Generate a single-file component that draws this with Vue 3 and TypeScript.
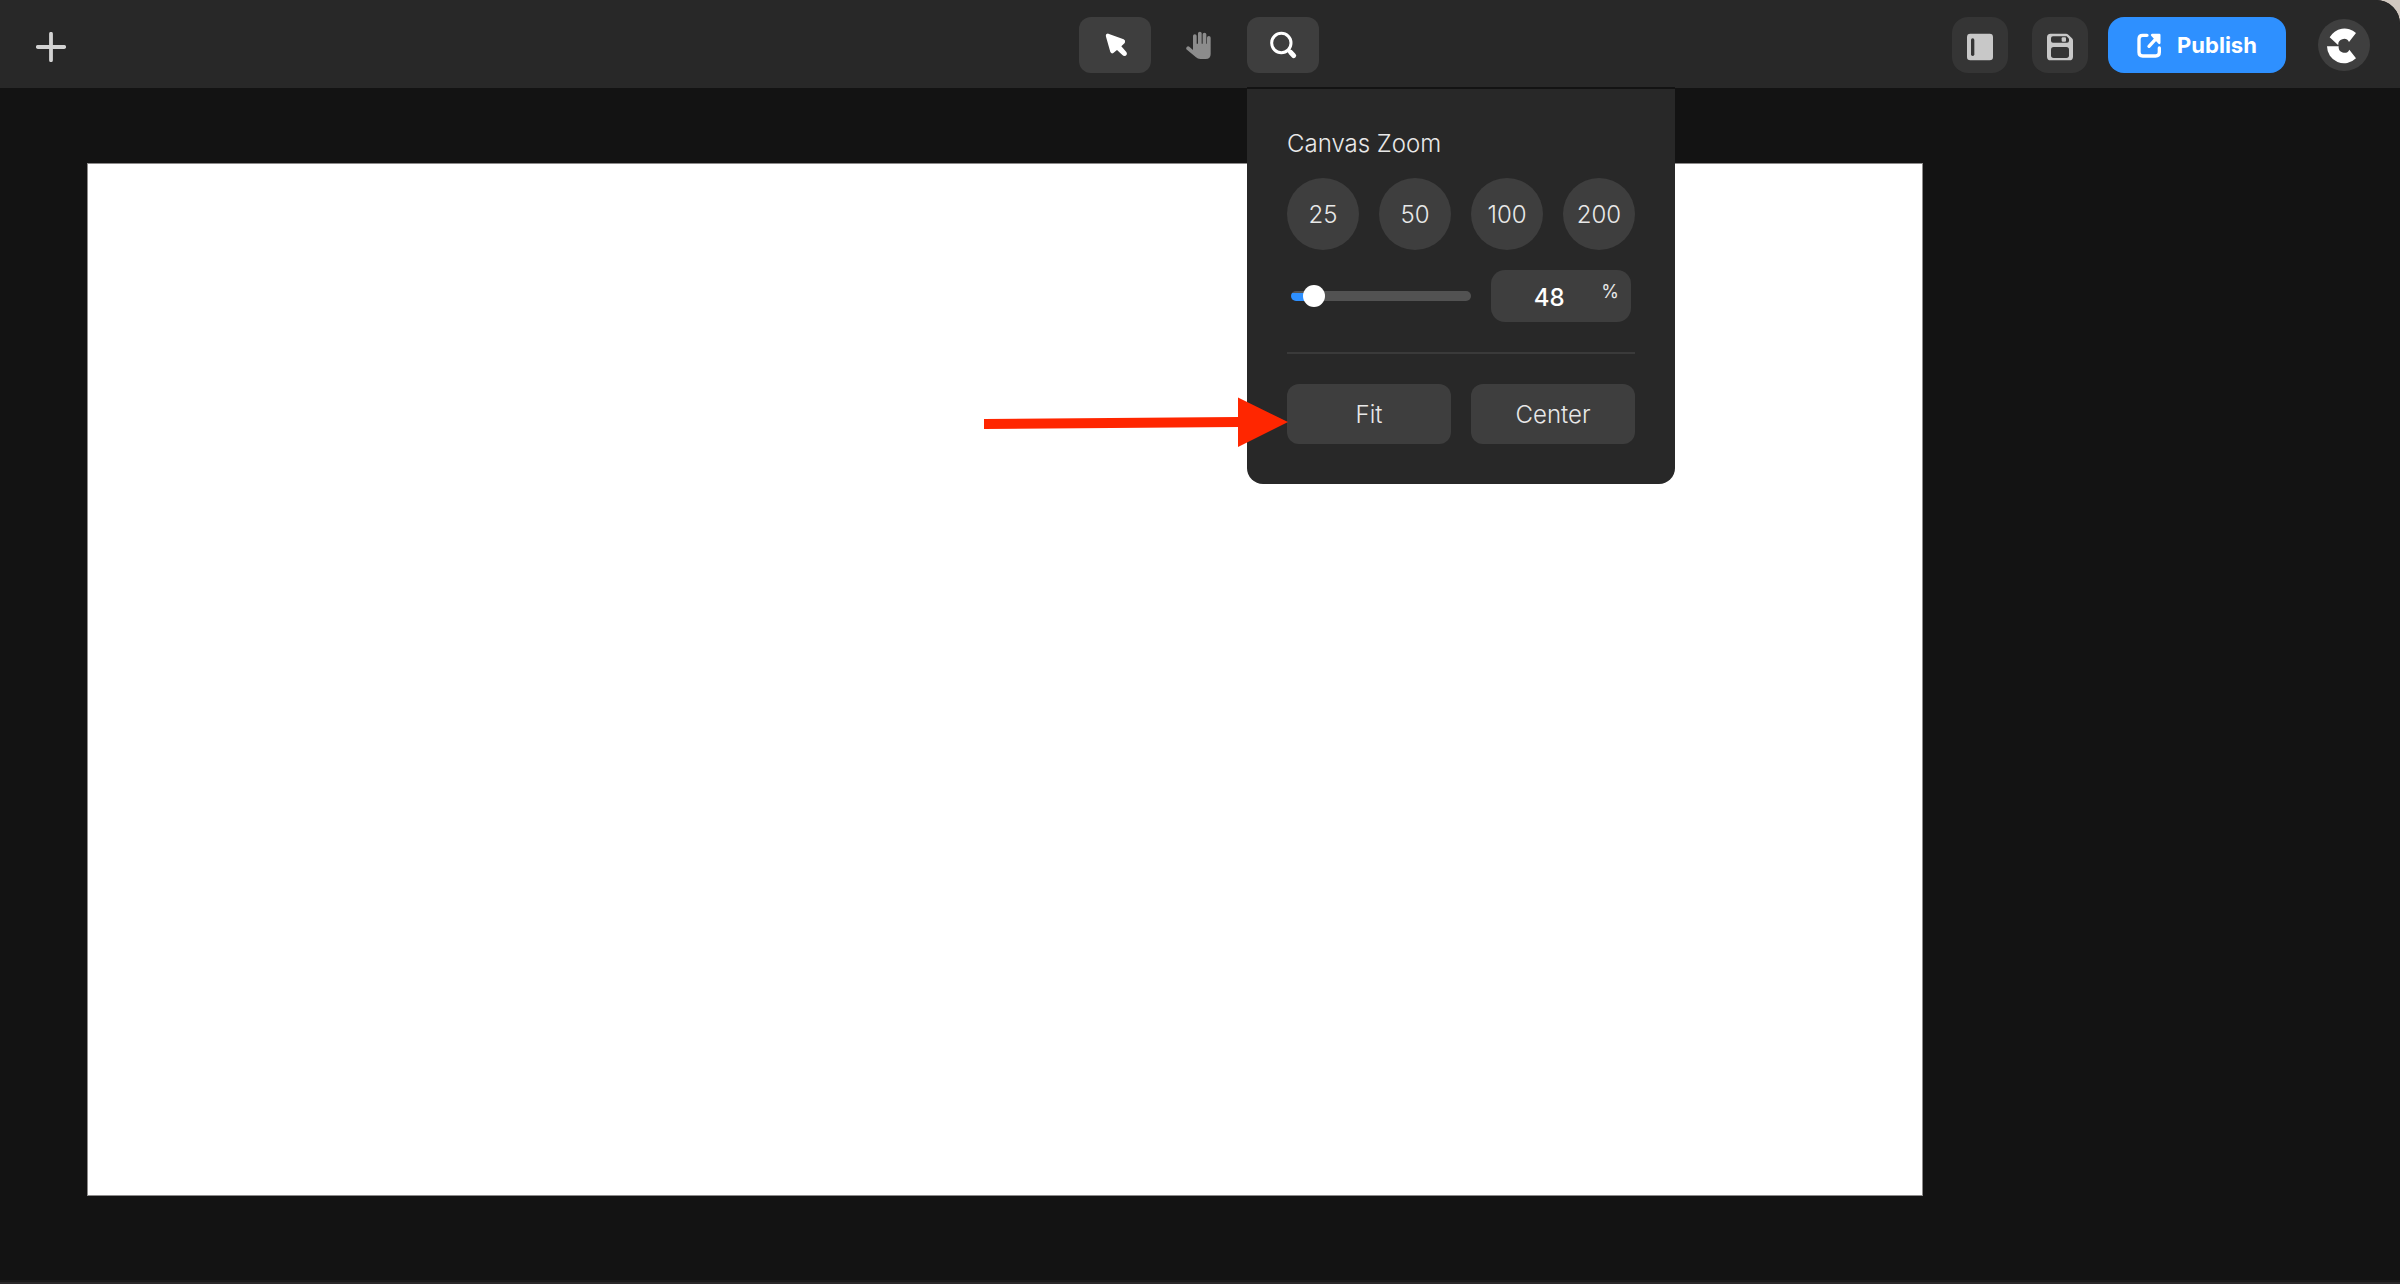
<script setup lang="ts">
import { computed, ref } from 'vue'

const MIN_ZOOM = 10
const MAX_ZOOM = 500
const presets: number[] = [25, 50, 100, 200]

const zoom = ref<number>(48)
const fill = computed(() => `${((zoom.value - MIN_ZOOM) / (MAX_ZOOM - MIN_ZOOM)) * 100 + 6}%`)
</script>

<template>
  <div class="backdrop">
    <div class="editor">
      <header class="topbar">
        <div class="side">
          <button class="add" type="button" aria-label="Add">
            <svg viewBox="0 0 30 30" width="30" height="30">
              <path d="M15 1.8V28.2M1.8 15H28.2" stroke="#d2d2d2" stroke-width="3.8" stroke-linecap="round" />
            </svg>
          </button>
        </div>

        <div class="tools">
          <button class="tool active" type="button" aria-label="Select">
            <svg viewBox="0 0 216 168">
              <path
                fill="#fff"
                d="M90 51L134 67Q140 70 138 76Q137 79 134 81L127 88L142 105Q145 109 143 113Q141 117 136 117Q133 117 131 115L114 99L103 108Q98 112 94 105L81 59Q79 51 85 50Q87 49 90 51Z"
              />
            </svg>
          </button>
          <button class="tool" type="button" aria-label="Pan">
            <svg viewBox="0 0 216 168">
              <path
                fill="#8c8c8c"
                d="M90 99V57Q90 52 95.500 52Q101 52 101 57V80H105V49Q105 44 110.500 44Q116 44 116 49V80H119V52Q119 47 124.500 47Q130 47 130 52V80H132V62Q132 57 137.500 57Q143 57 143 62V111Q143 126 128 126H112Q104 126 99 121L70 97Q68 92 72 89Q75 87 79 89Z"
              />
            </svg>
          </button>
          <div class="zoom-tool">
            <button class="tool active" type="button" aria-label="Zoom" aria-expanded="true">
              <svg viewBox="0 0 216 168" fill="none" stroke="#fff" stroke-linecap="round">
                <circle cx="103" cy="78" r="29" stroke-width="9" />
                <path d="M127 102L132 107" stroke-width="11" />
                <path d="M131 106L140 116" stroke-width="15" />
              </svg>
            </button>

            <section class="popover" aria-labelledby="zoom-title">
              <h2 id="zoom-title">Canvas Zoom</h2>
              <div class="presets">
                <button v-for="p in presets" :key="p" type="button" @click="zoom = p">{{ p }}</button>
              </div>
              <div class="level">
                <input
                  v-model.number="zoom"
                  class="slider"
                  type="range"
                  :min="MIN_ZOOM"
                  :max="MAX_ZOOM"
                  aria-label="Zoom level"
                  :style="{ '--fill': fill }"
                />
                <label class="amount">
                  <input v-model.number="zoom" type="text" inputmode="numeric" aria-label="Zoom percent" />
                  <span>%</span>
                </label>
              </div>
              <hr />
              <div class="actions">
                <button type="button">Fit</button>
                <button type="button">Center</button>
                <svg class="pointer" viewBox="0 0 304 50" aria-hidden="true">
                  <path fill="#ff2600" d="M1 22L255 20V0.500L305 25L255 50V30L1 32Z" />
                </svg>
              </div>
            </section>
          </div>
        </div>

        <div class="side end">
          <div class="icons">
            <button class="square" type="button" aria-label="Toggle panel">
              <svg viewBox="0 0 168 168">
                <rect x="45" y="50" width="78" height="80" rx="10" fill="#c8c8c8" />
                <rect x="57" y="64" width="10" height="53" rx="5" fill="#353535" />
              </svg>
            </button>
            <button class="square" type="button" aria-label="Save">
              <svg viewBox="0 0 168 168">
                <path
                  fill="#c8c8c8"
                  d="M56 50H102Q106 50 109 53L120 64Q123 67 123 71V119Q123 130 112 130H56Q45 130 45 119V61Q45 50 56 50Z"
                />
                <path fill="#353535" d="M63 58H104L111 65V71Q111 77 105 77H63Q57 77 57 71V64Q57 58 63 58Z" />
                <rect x="89" y="61" width="13" height="13" rx="3" fill="#c8c8c8" />
                <rect x="57" y="90" width="54" height="33" rx="8" fill="#353535" />
              </svg>
            </button>
          </div>
          <button class="publish" type="button">
            <svg viewBox="0 0 72 75" width="24" height="25" fill="none" stroke="#fff" stroke-width="10">
              <path d="M30 7H17Q6 7 6 18V58Q6 69 17 69H56Q67 69 67 58V45" stroke-linecap="round" />
              <path d="M36 40L60 14" stroke-linecap="round" />
              <path d="M45 6H67V30Z" fill="#fff" stroke-width="7" stroke-linejoin="round" />
            </svg>
            Publish
          </button>
          <button class="avatar" type="button" aria-label="Account">
            <svg viewBox="0 0 156 156" width="52" height="52" fill="#fff">
              <path d="M35 55A51 51 0 0 1 114 42L93 69A17 17 0 0 0 61 79Z" />
              <path d="M27 82A51 51 0 0 0 114 118L94 92A17 17 0 0 1 62 82Z" />
            </svg>
          </button>
        </div>
      </header>

      <main class="workspace">
        <div class="canvas"></div>
      </main>
      <div class="bottom-edge"></div>
    </div>
  </div>
</template>

<style>
body {
  margin: 0;
  background: #131313;
}
</style>

<style scoped>
* {
  box-sizing: border-box;
}

.backdrop {
  background: #d2c9c1;
  font-family: Inter, "Liberation Sans", sans-serif;
  font-size: 24px;
}

.editor {
  display: flex;
  flex-direction: column;
  min-height: 100vh;
  background: #131313;
  border-top-right-radius: 24px;
}

button,
input {
  margin: 0;
  padding: 0;
  border: 0;
  font: inherit;
  color: inherit;
  background: none;
}

svg {
  display: block;
}

.topbar {
  display: grid;
  grid-template-columns: 1fr auto 1fr;
  align-items: center;
  height: 88px;
  padding: 2px 30px 0 28px;
  background: #282828;
  border-top-right-radius: 24px;
}

.side {
  display: flex;
  align-items: center;
}

.add {
  padding: 4px 8px 0;
}

.tools {
  display: flex;
  gap: 12px;
}

.tool {
  width: 72px;
  height: 56px;
  border-radius: 12px;
}

.tool svg,
.square svg {
  width: 100%;
  height: 100%;
}

.tool.active {
  background: #3e3e3e;
}

.end {
  justify-content: flex-end;
}

.icons {
  display: flex;
  gap: 24px;
  margin-right: 20px;
}

.square {
  width: 56px;
  height: 56px;
  border-radius: 16px;
  background: #353535;
}

.publish {
  display: flex;
  align-items: center;
  justify-content: center;
  gap: 16px;
  width: 178px;
  height: 56px;
  margin-right: 32px;
  border-radius: 16px;
  background: #2e90ff;
  color: #fff;
  font-size: 22px;
  font-weight: 700;
}

.avatar {
  width: 52px;
  height: 52px;
  border-radius: 50%;
  background: #3f3f3f;
}

.zoom-tool {
  position: relative;
  display: flex;
}

.popover {
  position: absolute;
  top: 70px;
  left: 0;
  z-index: 1;
  width: 428px;
  padding: 39px 40px 40px;
  border-top: 2px solid #131313;
  border-radius: 0 0 16px 16px;
  background: #282828;
  color: #e8e8e8;
  font-weight: 300;
}

h2 {
  margin: 0 0 18px;
  font-size: 24px;
  font-weight: 300;
  line-height: 32px;
}

.presets {
  display: flex;
  gap: 20px;
  margin-bottom: 20px;
}

.presets button {
  width: 72px;
  height: 72px;
  border-radius: 50%;
  background: #3e3e3e;
}

.level {
  display: flex;
  align-items: center;
  justify-content: space-between;
  padding: 0 4px;
}

.slider {
  width: 180px;
  height: 22px;
  appearance: none;
}

.slider::-webkit-slider-runnable-track {
  height: 10px;
  border-radius: 5px;
  background: linear-gradient(#2e90ff, #2e90ff) 0 2px / var(--fill) 8px no-repeat #525252;
}

.slider::-webkit-slider-thumb {
  width: 22px;
  height: 22px;
  margin-top: -6px;
  appearance: none;
  border-radius: 50%;
  background: #fff;
}

.amount {
  display: flex;
  width: 140px;
  height: 52px;
  padding: 0 12px 0 6px;
  border-radius: 14px;
  background: #3e3e3e;
}

.amount input {
  flex: 1;
  min-width: 0;
  padding-top: 2px;
  color: #fff;
  font-weight: 500;
  text-align: center;
}

.amount span {
  font-size: 18px;
  font-weight: 400;
  line-height: 44px;
}

hr {
  height: 2px;
  margin: 30px 0;
  border: 0;
  background: #3a3a3a;
}

.actions {
  position: relative;
  display: flex;
  gap: 20px;
}

.actions button {
  flex: 1;
  height: 60px;
  border-radius: 12px;
  background: #3e3e3e;
}

.pointer {
  position: absolute;
  top: 13px;
  right: 100%;
  width: 304px;
  height: 50px;
  overflow: visible;
  pointer-events: none;
}

.workspace {
  display: flex;
  flex: 1;
  padding: 75px 477px 84px 87px;
}

.canvas {
  flex: 1;
  border: 1px solid #8c8a8a;
  background: #fff;
}

.bottom-edge {
  height: 4px;
  border-top: 2px solid #1b1a1a;
  background: #2a2829;
}
</style>
